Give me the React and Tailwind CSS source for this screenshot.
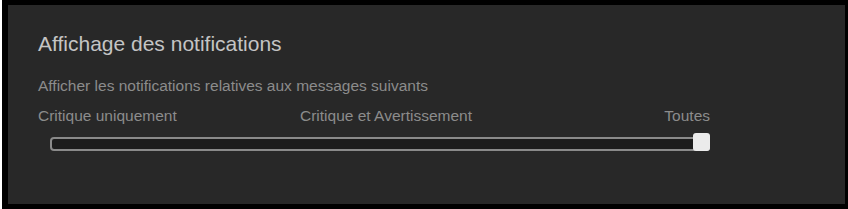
export default function App() {
  return (
    <div className="w-[848px] h-[209px] bg-white pl-[2px]">
      <div className="h-full bg-black pt-[5px] pl-[6px] pr-[3px] pb-[5px]">
        <div
          className="h-full bg-[#282828] pl-[30px] pt-[25px]"
          style={{ fontFamily: '"Liberation Sans", Arial, sans-serif' }}
        >
          {/* Header */}
          <h2 className="text-[21px] leading-[28px] text-[#c4c4c4]">Affichage des notifications</h2>
          <p className="mt-[19px] text-[15.5px] leading-[18px] text-[#8c8c8c]">
            Afficher les notifications relatives aux messages suivants
          </p>

          {/* Slider */}
          <div className="w-[672px] mt-[12px]">
            <div className="grid grid-cols-[262px_1fr_auto] text-[15.5px] leading-[18px] text-[#8c8c8c]">
              <span>Critique uniquement</span>
              <span>Critique et Avertissement</span>
              <span>Toutes</span>
            </div>
            <div className="relative mt-[12px] ml-[12px] h-[14px] rounded-[4px] border-2 border-[#8a8a8a] bg-[#1c1c1c]">
              <div className="absolute right-[-2px] top-[-6px] w-[17px] h-[18px] rounded-[3px] bg-[#ebebeb]" />
            </div>
          </div>
        </div>
      </div>
    </div>
  );
}
